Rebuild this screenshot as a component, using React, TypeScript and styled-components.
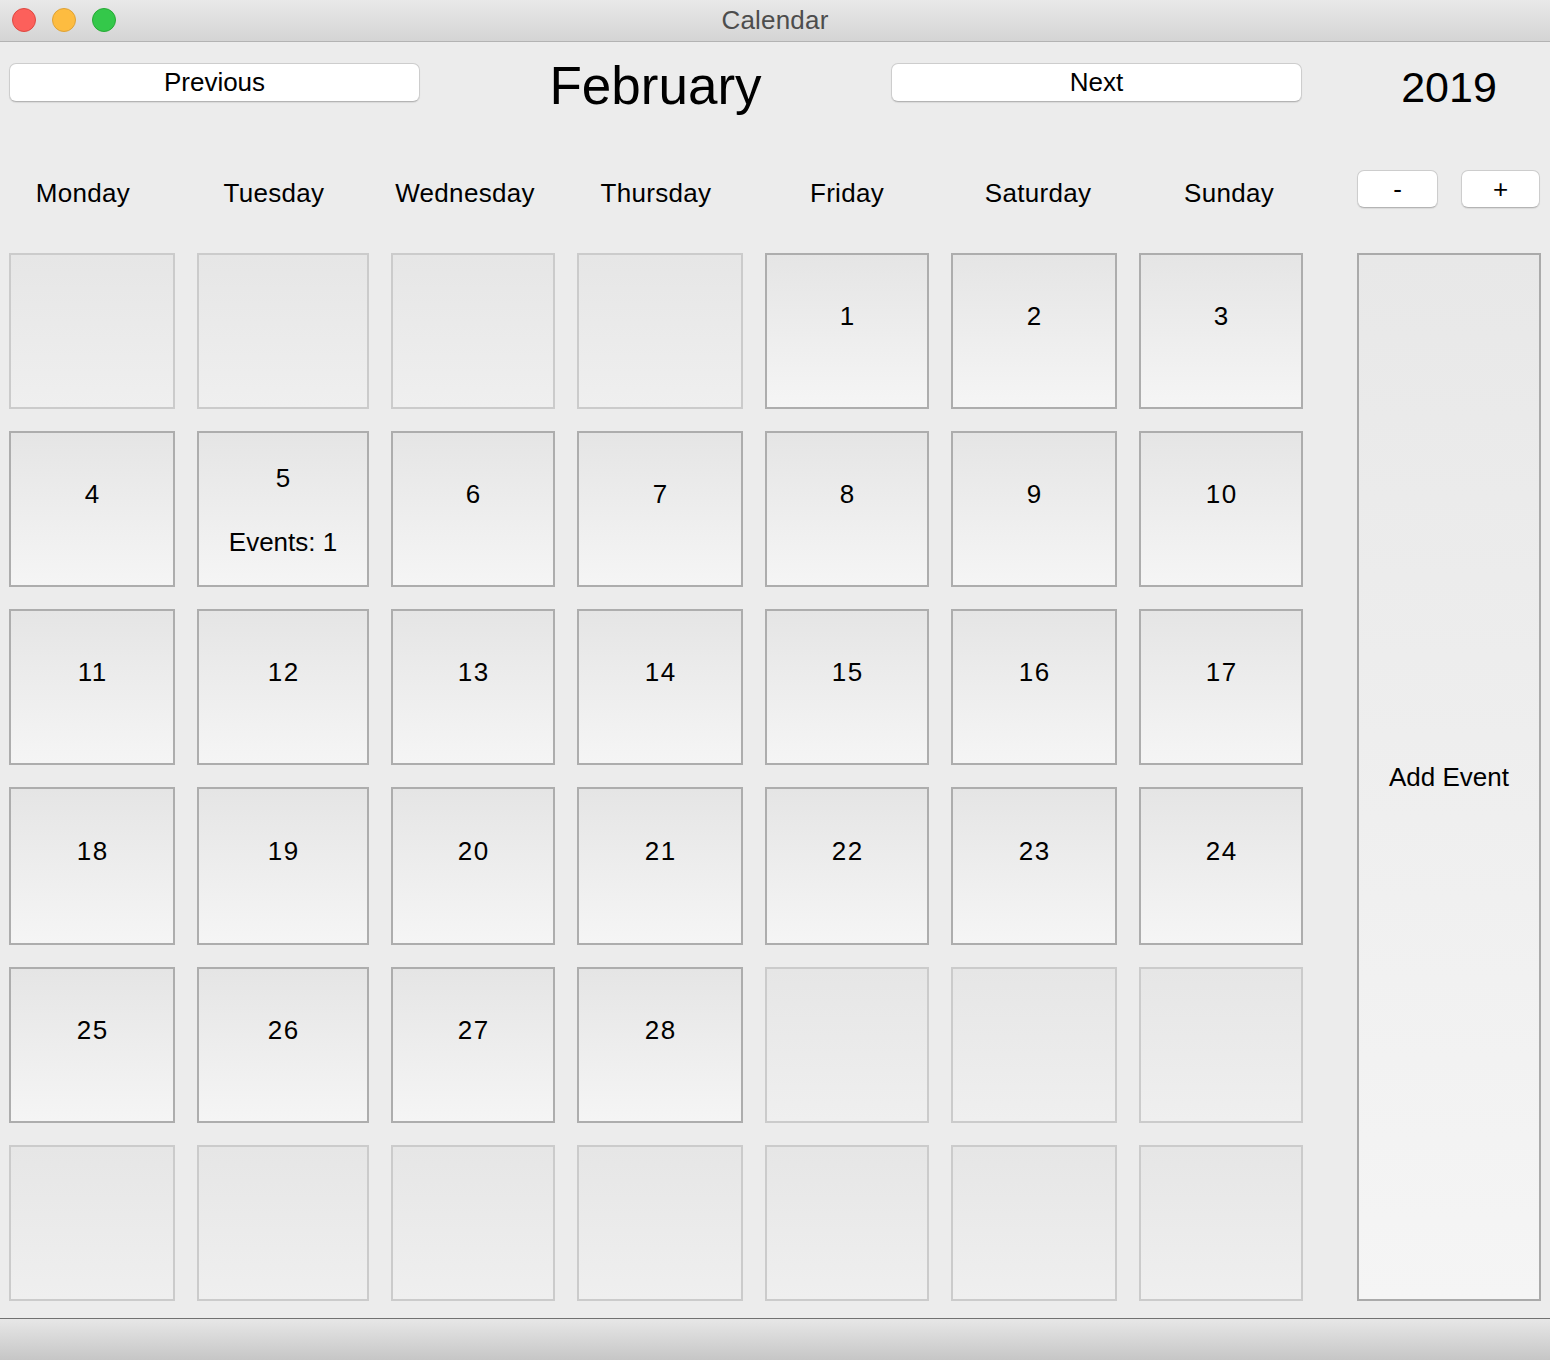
import React from "react";
import styled, { createGlobalStyle } from "styled-components";

const GlobalStyle = createGlobalStyle`
  html, body { margin: 0; padding: 0; }
  body {
    font-family: "Liberation Sans", Arial, Helvetica, sans-serif;
    background: #ececec;
    color: #000;
  }
  * { box-sizing: border-box; }
`;

const Window = styled.div`
  width: 1550px;
  height: 1360px;
  display: flex;
  flex-direction: column;
  background: #ececec;
  overflow: hidden;
`;

const TitleBar = styled.div`
  position: relative;
  height: 42px;
  flex: 0 0 42px;
  display: flex;
  align-items: center;
  justify-content: center;
  background: linear-gradient(to bottom, #e9e9e9 0%, #d4d4d4 100%);
  border-bottom: 1px solid #b3b3b3;
`;

const TitleText = styled.span`
  font-size: 26px;
  color: #4d4d4d;
  line-height: 1;
  margin-top: -2px;
  letter-spacing: 0.2px;
`;

const Lights = styled.div`
  position: absolute;
  left: 12px;
  top: 8px;
  display: flex;
  gap: 16px;
`;

const Light = styled.span<{ $fill: string; $edge: string }>`
  width: 24px;
  height: 24px;
  border-radius: 50%;
  background: ${(p) => p.$fill};
  border: 1px solid ${(p) => p.$edge};
`;

const Content = styled.div`
  flex: 1;
  display: flex;
  flex-direction: column;
  padding-top: 21px;
`;

const HeaderRow = styled.div`
  display: flex;
  align-items: center;
  height: 39px;
  padding-left: 9px;
`;

const MacButton = styled.button<{ $w: number }>`
  width: ${(p) => p.$w}px;
  height: 39px;
  background: #ffffff;
  border: 1px solid #cdcdcd;
  border-bottom-color: #b4b4b4;
  border-radius: 7px;
  box-shadow: 0 1px 1px rgba(0, 0, 0, 0.08);
  font-family: inherit;
  font-size: 26px;
  color: #000;
  padding: 0;
  display: flex;
  align-items: center;
  justify-content: center;
  cursor: pointer;
`;

const MonthLabel = styled.div`
  width: 471px;
  text-align: center;
  font-size: 53px;
  line-height: 1;
  margin-top: 6px;
`;

const YearLabel = styled.div`
  width: 184px;
  margin-left: 55px;
  text-align: center;
  font-size: 43px;
  line-height: 1;
  margin-top: 10px;
`;

const DayRow = styled.div`
  display: flex;
  align-items: flex-start;
  margin-top: 68px;
  height: 46px;
`;

const DayNames = styled.div`
  display: flex;
  gap: 25px;
`;

const DayName = styled.div`
  width: 166px;
  height: 46px;
  line-height: 46px;
  text-align: center;
  font-size: 26px;
  letter-spacing: 0.3px;
`;

const StepButtons = styled.div`
  display: flex;
  gap: 23px;
  margin-left: 45px;
`;

const StepButton = styled(MacButton)`
  height: 38px;
  font-size: 26px;
`;

const Body = styled.div`
  display: flex;
  gap: 54px;
  margin-top: 37px;
  padding-left: 9px;
`;

const DaysGrid = styled.div`
  display: grid;
  grid-template-columns: 166px 172px 164px 166px 164px 166px 164px;
  grid-template-rows: 156px 156px 156px 158px 156px 156px;
  gap: 22px;
`;

const Cell = styled.div<{ $empty: boolean }>`
  display: flex;
  flex-direction: column;
  align-items: center;
  justify-content: center;
  border: 2px solid ${(p) => (p.$empty ? "#cbcbcb" : "#adadad")};
  background: ${(p) =>
    p.$empty
      ? "linear-gradient(to bottom, #e6e6e6 0%, #efefef 100%)"
      : "linear-gradient(to bottom, #e5e5e5 0%, #f5f5f5 100%)"};
  font-size: 26px;
`;

const DayNumber = styled.div`
  line-height: 32px;
  height: 32px;
  margin-top: 1px;
  margin-bottom: 31px;
  letter-spacing: 1.5px;
  padding-left: 1.5px;
`;

const EventCount = styled.div`
  line-height: 32px;
  height: 32px;
  margin-top: 1px;
`;

const AddEvent = styled.button`
  width: 184px;
  border: 2px solid #aaaaaa;
  background: linear-gradient(to bottom, #e8e8e8 0%, #f5f5f5 100%);
  font-family: inherit;
  font-size: 26px;
  color: #000;
  padding: 0;
  display: flex;
  align-items: center;
  justify-content: center;
  cursor: pointer;
`;

const BottomBar = styled.div`
  height: 42px;
  flex: 0 0 42px;
  border-top: 1px solid #717171;
  background: linear-gradient(to bottom, #e7e7e7 0%, #c6c6c6 100%);
`;

const dayNames = ["Monday", "Tuesday", "Wednesday", "Thursday", "Friday", "Saturday", "Sunday"];
const events: Record<number, number> = { 5: 1 };

export default function App() {
  const startOffset = 4;
  const daysInMonth = 28;
  const cells = Array.from({ length: 42 }, (_, i) => {
    const d = i - startOffset + 1;
    return d >= 1 && d <= daysInMonth ? d : null;
  });

  return (
    <>
      <GlobalStyle />
      <Window>
        <TitleBar>
          <Lights>
            <Light $fill="#fc605b" $edge="#de4840" />
            <Light $fill="#fdbc40" $edge="#dea236" />
            <Light $fill="#34c84a" $edge="#27aa35" />
          </Lights>
          <TitleText>Calendar</TitleText>
        </TitleBar>
        <Content>
          <HeaderRow>
            <MacButton $w={411}>Previous</MacButton>
            <MonthLabel>February</MonthLabel>
            <MacButton $w={411}>Next</MacButton>
            <YearLabel>2019</YearLabel>
          </HeaderRow>
          <DayRow>
            <DayNames>
              {dayNames.map((n) => (
                <DayName key={n}>{n}</DayName>
              ))}
            </DayNames>
            <StepButtons>
              <StepButton $w={81}>-</StepButton>
              <StepButton $w={79}>+</StepButton>
            </StepButtons>
          </DayRow>
          <Body>
            <DaysGrid>
              {cells.map((d, i) => (
                <Cell key={i} $empty={d === null}>
                  {d !== null && (
                    <>
                      <DayNumber>{d}</DayNumber>
                      {events[d] ? <EventCount>Events: {events[d]}</EventCount> : null}
                    </>
                  )}
                </Cell>
              ))}
            </DaysGrid>
            <AddEvent>Add Event</AddEvent>
          </Body>
        </Content>
        <BottomBar />
      </Window>
    </>
  );
}
